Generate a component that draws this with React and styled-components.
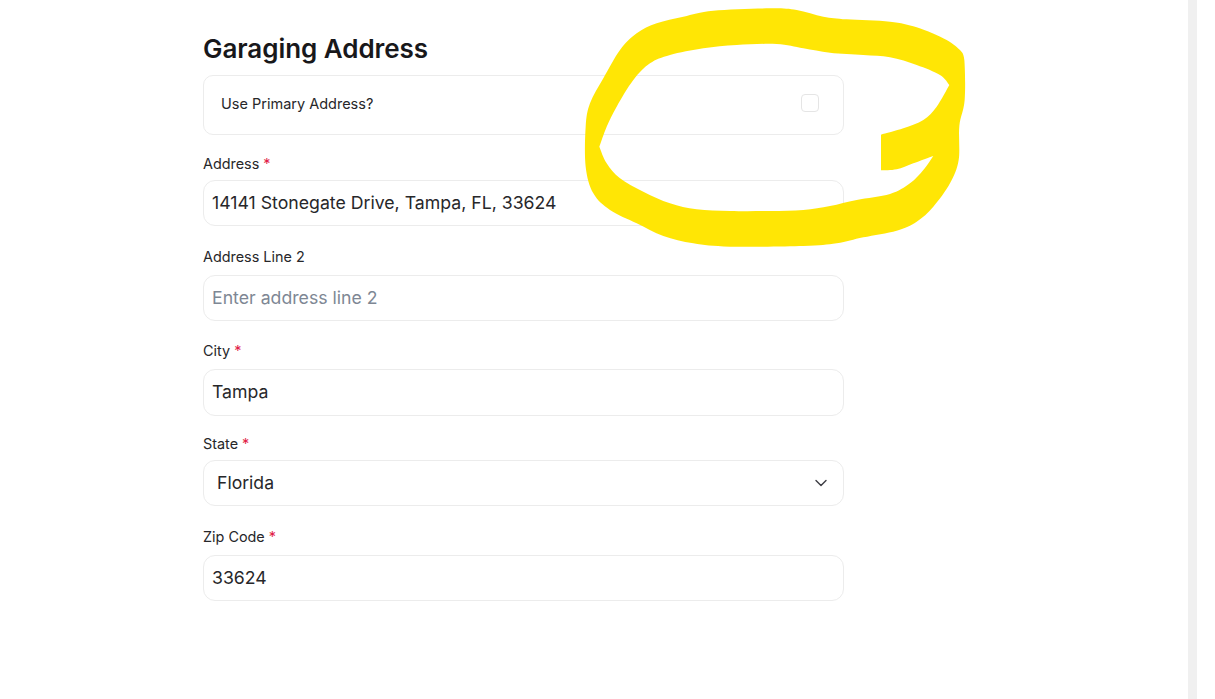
import React from "react";
import styled, { createGlobalStyle } from "styled-components";

const Global = createGlobalStyle`
  html, body { margin: 0; padding: 0; background: #fff; }
  body { font-family: Inter, "Liberation Sans", sans-serif; color: #18181b; overflow: hidden; }
`;

const Page = styled.div`
  position: relative;
  display: flex;
  width: 1215px;
  height: 699px;
  overflow: hidden;
  background: #fff;
`;

const Main = styled.main`
  flex: 1;
  padding: 33px 0 0 203px;
`;

const Track = styled.div`
  width: 9px;
  margin-right: 18px;
  background: #f0f0f0;
`;

const Form = styled.form`
  display: flex;
  flex-direction: column;
  width: 641px;
`;

const Heading = styled.h2`
  margin: 0 0 10px;
  font-size: 26px;
  line-height: 32px;
  font-weight: 600;
  letter-spacing: -0.05px;
  color: #18181b;
`;

const CheckCard = styled.label`
  display: flex;
  justify-content: space-between;
  box-sizing: border-box;
  height: 60px;
  padding: 18px 24px 0 17px;
  border: 1px solid #ececec;
  border-radius: 10px;
  font-size: 14.5px;
  line-height: 19px;
  color: #27272a;
`;

const CheckBox = styled.input.attrs({ type: "checkbox" })`
  appearance: none;
  width: 18px;
  height: 18px;
  margin: 0;
  border: 1px solid #e5e5e5;
  border-radius: 4px;
  background: #fff;
`;

const Field = styled.div`
  display: flex;
  flex-direction: column;
  gap: ${(p) => p.$gap}px;
  margin-top: ${(p) => p.$top}px;
`;

const Label = styled.label`
  font-size: 14.4px;
  line-height: 20px;
  color: #27272a;
`;

const Required = styled.span`
  color: #e11d48;
`;

const Input = styled.input`
  box-sizing: border-box;
  width: 100%;
  height: ${(p) => p.$height || 46}px;
  padding: 0 8px 2px;
  border: 1px solid #ececec;
  border-radius: 12px;
  outline: none;
  background: #fff;
  font-family: inherit;
  font-size: 17.7px;
  color: #27272a;

  &::placeholder {
    color: #7e8794;
    opacity: 1;
  }
`;

const SelectWrap = styled.div`
  position: relative;
`;

const Select = styled.select`
  display: block;
  box-sizing: border-box;
  width: 100%;
  height: 46px;
  padding: 0 13px 2px;
  appearance: none;
  border: 1px solid #ececec;
  border-radius: 12px;
  outline: none;
  background: #fff;
  font-family: inherit;
  font-size: 17.6px;
  color: #27272a;
`;

const Chevron = styled.svg`
  position: absolute;
  top: 13px;
  right: 13px;
  width: 20px;
  height: 20px;
  pointer-events: none;
`;

const Scribble = styled.svg`
  position: absolute;
  left: 570px;
  top: 0;
  width: 410px;
  height: 260px;
  pointer-events: none;
`;

const outer = [
  [1170, 150], [1183, 180], [1184, 300], [1168, 378], [1166, 480], [1140, 550], [1090, 620], [1040, 665],
  [980, 692], [880, 712], [800, 730], [700, 738], [480, 740], [370, 730], [280, 708], [200, 670], [120, 630],
  [70, 580], [47, 500], [47, 380], [60, 310], [100, 235], [150, 150], [200, 100], [260, 70], [340, 50],
  [430, 32], [600, 25], [680, 30], [760, 50], [830, 58], [960, 65], [1040, 82], [1130, 120], [1170, 150],
];
const innerA = [
  [1138, 255], [1110, 225], [1040, 195], [960, 172], [880, 165], [780, 158], [700, 145], [620, 132], [500, 135],
  [400, 145], [300, 165], [240, 190], [190, 240], [140, 320], [110, 380], [88, 440],
];
const innerB = [
  [88, 440], [110, 490], [150, 535], [220, 575], [300, 610], [380, 628], [480, 633], [600, 633], [700, 630],
  [780, 618], [860, 600], [960, 582], [1020, 550], [1060, 510], [1090, 468],
];
const innerC = [[1090, 468], [1030, 490], [980, 508], [933, 511]];
const innerD = [[933, 404], [1000, 385], [1060, 360], [1100, 320], [1138, 255]];

// Catmull-Rom through the traced points, so each run stays smooth between its corners.
const curve = (pts) => {
  let d = "";
  for (let i = 0; i < pts.length - 1; i++) {
    const p0 = pts[i - 1] || pts[i];
    const p1 = pts[i];
    const p2 = pts[i + 1];
    const p3 = pts[i + 2] || p2;
    const c1 = [p1[0] + (p2[0] - p0[0]) / 6, p1[1] + (p2[1] - p0[1]) / 6];
    const c2 = [p2[0] - (p3[0] - p1[0]) / 6, p2[1] - (p3[1] - p1[1]) / 6];
    d += `C${c1[0]} ${c1[1]} ${c2[0]} ${c2[1]} ${p2[0]} ${p2[1]}`;
  }
  return d;
};

const inkPath =
  `M${outer[0].join(" ")}${curve(outer)}Z` +
  `M${innerA[0].join(" ")}${curve(innerA)}${curve(innerB)}${curve(innerC)}L933 404${curve(innerD)}Z`;

const Req = () => <Required>*</Required>;

export default function App() {
  return (
    <Page>
      <Global />
      <Main>
        <Form>
          <Heading>Garaging Address</Heading>
          <CheckCard>
            Use Primary Address?
            <CheckBox />
          </CheckCard>
          <Field $top={19} $gap={6}>
            <Label>Address <Req /></Label>
            <Input defaultValue="14141 Stonegate Drive, Tampa, FL, 33624" />
          </Field>
          <Field $top={21} $gap={8}>
            <Label>Address Line 2</Label>
            <Input placeholder="Enter address line 2" />
          </Field>
          <Field $top={20} $gap={8}>
            <Label>City <Req /></Label>
            <Input $height={47} defaultValue="Tampa" />
          </Field>
          <Field $top={18} $gap={6}>
            <Label>State <Req /></Label>
            <SelectWrap>
              <Select defaultValue="Florida">
                <option>Florida</option>
              </Select>
              <Chevron viewBox="0 0 24 24" fill="none" stroke="#3f3f46" strokeWidth="1.7" strokeLinecap="round" strokeLinejoin="round">
                <path d="m6 9 6 6 6-6" />
              </Chevron>
            </SelectWrap>
          </Field>
          <Field $top={21} $gap={8}>
            <Label>Zip Code <Req /></Label>
            <Input defaultValue="33624" />
          </Field>
        </Form>
      </Main>
      <Track />
      <Scribble viewBox="0 0 1230 780">
        <path d={inkPath} fill="#ffe500" fillOpacity="0.98" fillRule="evenodd" />
      </Scribble>
    </Page>
  );
}
